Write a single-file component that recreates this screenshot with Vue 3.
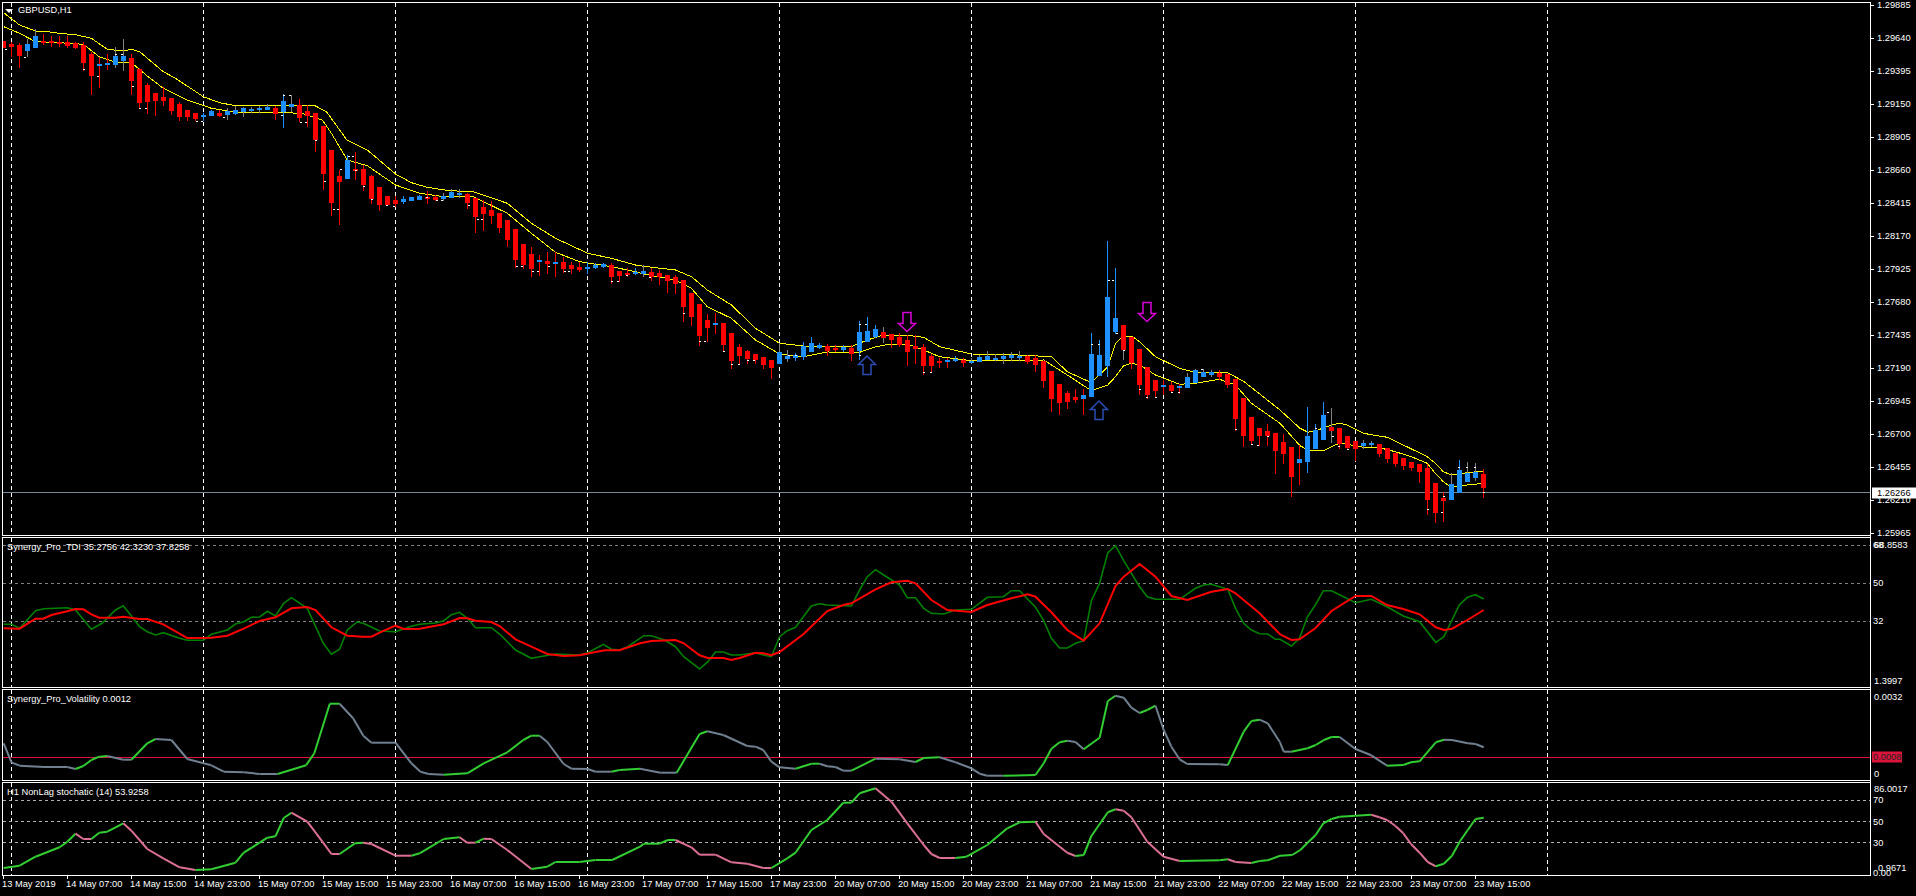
<script setup>
// candles read as [type, bodyTop, bodyBottom, wickTop, wickBottom]
// r red, b blue, g blue with grey wick, c blue with red wick, R red with grey wick
const zoneA = [
  ["r",123,145,123,145],["r",132,141,125,170],["r",134,168,128,203],["g",132,153,118,172],["g",108,144,88,144],
  ["r",124,128,103,135],["r",124,130,108,140],["r",126,131,108,140],["r",125,137,108,145],["r",130,144,125,148],
  ["r",135,189,125,212],["r",162,228,155,285],["c",192,198,172,264],["c",189,194,162,210],["g",168,195,142,203],
  ["g",168,184,118,212],["r",174,243,162,285],["r",207,309,205,325],["r",255,306,250,342],["r",279,303,279,347],
  ["r",291,303,260,318],["r",294,333,294,345],["r",312,351,306,362],["r",330,352,330,362],["r",339,358,339,362],
  ["b",345,351,340,362],["b",333,348,330,348],["r",339,347,330,350],["g",333,346,325,360],["g",330,342,318,345],
  ["g",324,336,320,350],["g",327,333,320,340],["g",324,330,318,340],["g",321,330,312,330],["r",324,342,318,360],
  ["b",303,336,283,384],["g",312,321,285,336],["r",315,354,297,366],["r",333,348,315,380],["r",339,420,339,455],
  ["r",378,522,378,570],["r",450,609,450,648],["r",528,546,510,675],["b",480,537,465,537],["r",507,510,456,540],
  ["r",507,555,495,573],["r",528,598,525,612],["r",561,615,561,633],["r",588,615,588,618],["r",600,612,588,620],
  ["b",597,606,588,612],["b",591,603,590,603],["b",588,600,585,600],["r",591,594,573,612],["r",591,600,585,603],
  ["g",588,597,580,603],["g",576,594,567,594],["g",579,585,567,594],["r",582,609,580,627],["r",594,651,594,699],
  ["r",621,642,600,693],["r",630,648,603,672],["r",639,684,639,699],["r",660,720,660,741],["r",687,780,687,804],
  ["r",732,795,732,806],["r",762,807,741,831],["c",780,786,765,828],["r",783,792,756,822],["c",786,789,755,831],
  ["r",786,807,772,819],["r",795,807,785,822],["r",801,810,785,815],["b",801,807,785,822],["b",795,804,790,806],
  ["b",792,801,790,803],["r",795,831,790,852],["r",813,828,813,846],["r",819,822,805,831],["b",816,822,805,825],
];
const zoneB = [
  ["g",213,222,195,231],["r",216,231,204,243],["r",219,231,210,255],["r",225,243,225,279],["r",231,252,225,282],
  ["r",240,321,240,366],["r",279,351,279,378],["r",312,408,312,438],["r",360,384,342,426],["c",369,372,340,402],
  ["r",369,435,369,456],["r",399,483,399,507],["r",441,468,432,495],["r",453,477,450,492],["r",462,480,462,492],
  ["r",471,495,471,507],["r",480,504,480,537],["g",456,492,429,492],["g",468,477,450,486],["b",465,474,460,483],
  ["b",438,471,426,480],["b",429,456,411,456],["b",435,444,429,447],["r",438,453,432,468],["r",444,450,435,456],
  ["b",441,450,435,456],["r",444,462,435,483],["b",396,453,363,480],["b",393,426,351,426],["b",387,411,375,414],
  ["R",396,414,382,429],["r",402,420,402,444],["r",411,435,399,441],["r",420,456,405,498],["r",438,447,405,492],
  ["r",441,498,432,525],["r",468,498,462,519],["r",483,489,474,504],["c",480,486,474,504],["b",477,483,468,486],
  ["r",480,489,474,501],["g",483,486,474,492],["g",471,486,465,486],["g",468,480,453,480],["g",474,477,462,483],
  ["g",468,477,459,492],["g",465,474,456,483],["g",468,471,453,483],["r",468,486,465,492],["r",474,495,465,516],
  ["r",483,543,483,564],["r",513,597,513,636],["r",552,609,552,645],["r",579,606,573,627],["r",591,600,567,609],
  ["c",585,597,567,645],["b",462,591,399,591],["b",465,528,420,528],["b",291,498,123,531],["b",354,396,204,402],
  ["R",375,450,375,480],["r",411,489,411,507],["r",447,555,447,585],["r",501,585,501,597],["r",540,573,540,591],
  ["c",555,558,540,585],["r",555,573,546,579],["c",558,564,552,582],["g",531,564,519,564],["g",510,549,507,549],
  ["g",516,531,507,531],["g",516,525,510,531],["r",519,531,510,540],["r",522,555,522,564],["r",537,657,537,693],
  ["r",594,708,594,741],["r",651,723,651,735],["r",684,708,684,738],["r",693,708,672,738],["r",699,753,699,822],
];
const zoneC = [
  ["r",186,222,162,252],["r",201,291,201,350],["c",237,249,195,315],
];
const zoneD = [
  ["b",108,186,21,219],["b",90,147,72,147],["b",45,120,6,120],["R",81,93,24,129],["r",84,132,84,147],
  ["r",108,144,108,150],["r",123,147,123,183],["g",129,138,120,147],["g",129,135,123,141],["r",132,162,132,171],
  ["r",144,177,144,189],["r",159,192,159,201],["r",174,198,174,210],["r",186,204,186,213],["r",192,216,192,249],
  ["r",204,300,192,345],["r",249,339,249,369],["r",294,303,276,366],["g",252,300,219,300],["b",210,279,180,279],
  ["g",219,246,186,246],["g",216,234,189,243],["r",222,264,207,294],
];

const toCandles = (rows, originY) =>
  rows.map((r) => ({
    type: r[0],
    top: originY + r[1] / 3,
    bottom: originY + r[2] / 3,
    high: originY + r[3] / 3,
    low: originY + r[4] / 3,
  }));

const colors = { r: "#ff0000", b: "#1e90ff", g: "#1e90ff", c: "#1e90ff", R: "#ff0000" };
const wickColors = { r: "#ff0000", b: "#1e90ff", g: "#808080", c: "#ff0000", R: "#808080" };

const candles = [
  ...toCandles(zoneA, 0),
  ...toCandles(zoneB, 200),
  ...toCandles(zoneC, 380),
  ...toCandles(zoneD, 400),
].map((c, i) => ({
  ...c,
  x: 1 + 8 * i,
  wickX: 3 + 8 * i,
  height: Math.max(2, Math.round(c.bottom - c.top)),
  fill: colors[c.type],
  wick: wickColors[c.type],
}));

// helper: points read from crops, back to page pixels
const pts = (ox, sx, oy, list) =>
  list.map(([x, y]) => [ox + x / sx, oy + y / 3]);
const join = (...lists) => lists.flat();
const toPoints = (list) => list.map((p) => p[0].toFixed(1) + "," + p[1].toFixed(1)).join(" ");

const upperBand = join(
  pts(0, 2.45, 0, [[9,38],[48,75],[87,93],[116,95],[145,100],[185,104],[224,115],[263,148],[302,153],[322,148],[342,155],[400,215],[430,235],[498,290],[538,308],[577,317],[655,318],[734,315],[773,318],[800,335],[850,420],[900,450],[969,522],[1008,548],[1047,562],[1100,572],[1160,575],[1243,610],[1302,670],[1361,715],[1440,760],[1498,775],[1557,795]]),
  pts(640, 2.45, 200, [[9,199],[87,210],[126,230],[165,270],[224,315],[283,385],[342,430],[400,438],[518,440],[557,420],[597,405],[655,406],[695,412],[734,440],[812,462],[890,463],[1008,470],[1047,515],[1106,548],[1146,500],[1165,430],[1185,408],[1205,408],[1224,425],[1263,470],[1322,505],[1361,517],[1440,518],[1480,545],[1568,630]]),
  pts(1300, 3, 400, [[0,85],[24,97],[48,92],[94,75],[118,70],[142,75],[190,100],[238,108],[262,112],[310,135],[382,170],[406,190],[430,215],[454,225],[502,218],[550,213]])
);
const lowerBand = join(
  pts(0, 2.45, 0, [[9,80],[48,100],[87,125],[145,128],[204,133],[243,170],[283,187],[322,188],[361,228],[400,265],[459,300],[518,325],[577,337],[665,338],[694,338],[740,340],[790,360],[812,400],[851,480],[900,497],[969,555],[1028,580],[1087,590],[1160,590],[1243,640],[1302,700],[1361,757],[1420,785],[1498,800],[1557,815]]),
  pts(640, 2.45, 200, [[9,222],[87,240],[126,265],[165,320],[224,355],[283,420],[342,462],[400,470],[459,456],[538,457],[577,440],[616,432],[655,432],[695,450],[734,470],[812,482],[890,482],[989,480],[1047,525],[1106,572],[1146,555],[1165,530],[1185,497],[1204,490],[1224,495],[1263,525],[1322,553],[1361,550],[1420,538],[1459,555],[1498,610],[1568,670]]),
  pts(1300, 3, 400, [[0,137],[24,150],[70,152],[94,140],[118,130],[142,133],[190,142],[238,143],[286,155],[334,170],[382,190],[406,220],[430,245],[454,262],[502,255],[550,250]])
);

// little white dashes beside the candles
const dashes = join(
  pts(0, 2.45, 0, [[15,148],[62,172],[207,206],[241,227],[285,162],[300,162],[325,259],[343,323],[357,323],[482,362],[495,362],[548,350],[690,345],[697,285],[710,285],[738,366],[750,366],[775,420],[796,544],[818,628],[828,628],[836,507],[855,468],[866,468],[872,509],[893,557],[912,598],[948,615],[966,618],[1045,592],[1070,601],[1082,601],[1148,615],[1170,657],[1180,657],[1266,797],[1280,797],[1305,814],[1318,814],[1345,798],[1385,814],[1395,814],[1500,842],[1515,842],[1535,825]]),
  pts(640, 2.45, 200, [[25,231],[107,340],[148,423],[160,423],[205,452],[225,493],[242,493],[265,480],[280,480],[365,465],[381,465],[540,372],[553,372],[539,465],[695,517],[712,517],[1108,432],[1125,432],[1148,240],[1160,240],[1168,399],[1185,450],[1225,568],[1243,590],[1263,590],[1303,576],[1320,576],[1377,507],[1460,686],[1500,732],[1515,735],[1538,708]]),
  pts(1300, 3, 400, [[48,85],[85,35],[100,108],[118,138],[145,147],[385,327],[425,337],[432,287],[478,202],[500,202],[525,202],[552,277]])
);

const tdiGreen = join(
  pts(0, 2.45, 530, [[9,283],[28,283],[48,295],[87,242],[108,236],[165,233],[185,240],[224,298],[250,280],[283,240],[302,227],[322,258],[342,290],[361,305],[381,315],[400,308],[440,325],[459,331],[498,331],[518,313],[557,300],[577,282],[597,275],[616,262],[636,261],[655,244],[675,258],[695,220],[714,203],[753,235],[792,340],[812,373],[832,358],[851,300],[875,276],[890,280],[930,303],[969,305],[1008,289],[1028,283],[1067,279],[1087,272],[1106,254],[1126,247],[1145,265],[1165,293],[1204,293],[1224,312],[1263,360],[1302,385],[1322,380],[1361,372],[1420,375],[1440,368],[1478,343],[1498,358],[1518,360],[1538,350]]),
  pts(640, 2.45, 530, [[9,317],[28,317],[60,330],[87,350],[107,380],[146,417],[166,395],[185,366],[204,366],[224,375],[244,375],[283,368],[302,375],[322,380],[342,320],[361,302],[381,292],[420,228],[440,221],[459,225],[518,228],[538,180],[557,140],[577,119],[597,135],[636,165],[655,203],[675,203],[695,235],[714,250],[744,252],[773,240],[812,238],[851,202],[890,200],[910,182],[930,182],[969,232],[989,272],[1008,325],[1028,354],[1047,354],[1067,340],[1087,332],[1106,212],[1126,160],[1146,68],[1165,47],[1185,92],[1224,170],[1243,200],[1263,208],[1322,208],[1361,175],[1381,165],[1400,163],[1440,178],[1459,235],[1479,280],[1498,300],[1518,311],[1538,312],[1557,328]]),
  pts(1280, 2.465, 380, [[0,778],[28,798],[48,775],[67,712],[87,675],[107,632],[127,632],[186,668],[225,658],[264,680],[304,708],[344,725],[384,787],[404,770],[442,675],[462,652],[482,644],[502,657]])
);
const tdiRed = join(
  pts(0, 2.45, 530, [[9,295],[48,296],[87,266],[106,266],[126,255],[165,244],[185,237],[204,238],[224,253],[243,263],[283,263],[302,260],[342,267],[361,267],[400,283],[459,324],[518,323],[557,317],[597,296],[636,273],[675,262],[714,235],[753,231],[773,240],[812,292],[851,317],[890,320],[910,320],[930,308],[969,287],[989,297],[1028,296],[1087,283],[1126,264],[1145,265],[1165,272],[1204,276],[1224,288],[1263,328],[1302,350],[1341,372],[1381,378],[1420,376],[1459,366],[1482,361],[1518,361]]),
  pts(640, 2.45, 530, [[0,340],[28,333],[87,330],[107,340],[146,376],[166,384],[204,384],[224,390],[244,384],[283,368],[302,370],[322,376],[342,366],[400,313],[459,243],[498,225],[518,220],[577,178],[616,157],[655,152],[675,160],[714,210],[753,240],[812,246],[851,225],[910,205],[950,193],[969,200],[1008,247],[1047,300],[1087,332],[1126,280],[1165,168],[1185,140],[1224,102],[1263,140],[1302,198],[1341,210],[1400,185],[1440,177],[1459,190],[1518,250]]),
  pts(1280, 2.465, 380, [[0,763],[28,780],[48,778],[87,745],[127,693],[186,648],[225,648],[264,675],[304,687],[344,703],[384,742],[404,750],[424,746],[462,720],[502,690]])
);

const volLine = join(
  pts(0, 2.45, 530, [[9,640],[28,697],[48,707],[108,711],[165,711],[185,717],[204,708],[224,690],[243,680],[263,678],[302,689],[322,689],[361,640],[381,627],[420,630],[459,687],[518,706],[548,725],[597,727],[636,732],[680,732],[750,706],[770,670],[808,521],[832,521],[865,565],[890,617],[910,638],[969,638],[1008,700],[1030,725],[1050,732],[1087,734],[1145,730],[1185,700],[1243,667],[1282,630],[1302,617],[1322,617],[1341,636],[1381,702],[1400,716],[1440,717],[1459,725],[1498,725],[1518,720]]),
  pts(640, 2.45, 530, [[0,716],[50,728],[90,728],[146,612],[165,604],[204,615],[263,648],[283,650],[302,660],[322,695],[342,712],[381,716],[420,701],[440,701],[459,709],[479,711],[498,722],[518,722],[577,686],[636,688],[675,696],[695,684],[734,682],[773,697],[812,715],[832,731],[851,737],[890,737],[969,735],[989,700],[1008,656],[1028,637],[1047,632],[1067,636],[1087,658],[1126,623],[1146,513],[1165,497],[1185,503],[1204,533],[1224,549],[1243,540],[1263,527],[1283,600],[1302,650],[1322,688],[1341,702],[1420,703],[1440,705],[1479,605],[1498,573],[1518,569],[1538,580]]),
  pts(1280, 2.465, 680, [[0,187],[9,215],[28,215],[68,205],[88,195],[107,181],[127,171],[147,171],[186,207],[225,226],[264,257],[304,255],[323,247],[344,244],[384,187],[404,179],[424,180],[463,190],[482,192],[502,202]])
);
const stoLine = join(
  pts(0, 2.45, 530, [[9,1014],[48,1007],[87,980],[146,952],[165,935],[185,911],[204,927],[224,927],[243,908],[263,905],[302,880],[322,902],[361,957],[400,985],[440,1012],[479,1020],[518,1018],[577,998],[597,968],[636,938],[655,923],[675,919],[695,864],[714,848],[753,875],[790,935],[812,972],[832,972],[870,940],[890,938],[910,942],[969,977],[1008,977],[1028,970],[1087,927],[1126,922],[1145,938],[1165,938],[1185,926],[1204,927],[1243,960],[1302,1017],[1341,1010],[1361,996],[1420,996],[1459,990],[1500,990]]),
  pts(640, 2.45, 530, [[0,950],[9,941],[48,941],[68,930],[87,930],[126,952],[146,974],[185,974],[224,997],[263,1001],[302,1014],[322,1014],[361,985],[381,968],[420,900],[459,870],[498,818],[518,818],[538,790],[577,775],[616,815],[655,880],[695,945],[714,972],[734,984],[773,984],[800,980],[851,945],[900,895],[930,877],[969,875],[989,912],[1047,968],[1067,978],[1087,975],[1106,918],[1146,847],[1165,838],[1185,842],[1204,862],[1243,935],[1283,980],[1322,993],[1420,991],[1440,988],[1459,996],[1498,999],[1518,993],[1538,991]]),
  pts(1280, 2.465, 680, [[0,527],[30,525],[50,510],[68,488],[88,465],[107,430],[127,417],[147,410],[186,407],[225,404],[245,412],[264,420],[284,437],[304,460],[323,492],[344,518],[364,546],[384,559],[404,551],[424,527],[444,483],[463,450],[482,417],[502,413]])
);

// rising stretches are green, falling ones take the second colour
const toSegments = (list, fallColor) => {
  const out = [];
  let color = "#32cd32";
  for (let i = 1; i < list.length; i++) {
    const dy = list[i][1] - list[i - 1][1];
    if (dy < 0) color = "#32cd32";
    if (dy > 0) color = fallColor;
    out.push({ points: toPoints([list[i - 1], list[i]]), color });
  }
  return out;
};
const volSegments = toSegments(volLine, "#708090");
const stoSegments = toSegments(stoLine, "#db7093");

const gridX = [11, 203, 395, 587, 779, 971, 1163, 1355, 1547];

const priceLabels = [
  "1.29885","1.29640","1.29395","1.29150","1.28905","1.28660","1.28415","1.28170","1.27925",
  "1.27680","1.27435","1.27190","1.26945","1.26700","1.26455","1.26210","1.25965",
].map((text, i) => ({ text, y: 4.7 + 33 * i, left: 6, tick: true }));

const panels = [
  {
    id: "main", top: 2, height: 534, levels: [], title: "",
    labels: [...priceLabels, { text: "1.26266", y: 492.5, left: 1, boxed: "white" }],
  },
  {
    id: "tdi", top: 537, height: 151, levels: [545, 583, 621], levelColor: "#808080",
    title: "Synergy_Pro_TDI 35.2756 42.3230 37.8258",
    labels: [
      { text: "68", y: 545, left: 2 },
      { text: "68.8583", y: 545, left: 3 },
      { text: "50", y: 583, left: 2 },
      { text: "32", y: 621, left: 2 },
      { text: "1.3997", y: 680.7, left: 3 },
    ],
  },
  {
    id: "vol", top: 689, height: 92, levels: [], title: "Synergy_Pro_Volatility 0.0012",
    labels: [
      { text: "0.0032", y: 696.7, left: 3 },
      { text: "0.0008", y: 757.3, left: 1, boxed: "crimson" },
      { text: "0", y: 773.7, left: 3 },
    ],
  },
  {
    id: "sto", top: 782, height: 94, levels: [800, 821, 842], levelColor: "#b0b0b0",
    title: "H1 NonLag stochatic (14) 53.9258",
    labels: [
      { text: "86.0017", y: 789.3, left: 3 },
      { text: "70", y: 800.3, left: 2 },
      { text: "50", y: 821.7, left: 2 },
      { text: "30", y: 842.7, left: 2 },
      { text: "0.00", y: 873, left: 2 },
      { text: "0.9671", y: 868.3, left: 7 },
    ],
  },
];

const timeLabels = [
  "13 May 2019","14 May 07:00","14 May 15:00","14 May 23:00","15 May 07:00","15 May 15:00",
  "15 May 23:00","16 May 07:00","16 May 15:00","16 May 23:00","17 May 07:00","17 May 15:00",
  "17 May 23:00","20 May 07:00","20 May 15:00","20 May 23:00","21 May 07:00","21 May 15:00",
  "21 May 23:00","22 May 07:00","22 May 15:00","22 May 23:00","23 May 07:00","23 May 15:00",
];

const upArrow = (x, y) =>
  `${x},${y} ${x + 8.5},${y + 8.5} ${x + 4},${y + 8.5} ${x + 4},${y + 18.5} ${x - 4},${y + 18.5} ${x - 4},${y + 8.5} ${x - 8.5},${y + 8.5}`;
const downArrow = (x, y) =>
  `${x - 4},${y} ${x + 4},${y} ${x + 4},${y + 11} ${x + 8.5},${y + 11} ${x},${y + 19} ${x - 8.5},${y + 11} ${x - 4},${y + 11}`;
const arrowsUp = [upArrow(867, 356), upArrow(1099, 401)];
const arrowsDown = [downArrow(907, 312.5), downArrow(1147, 302.5)];
</script>

<template>
  <div class="terminal">
    <div v-for="p in panels" :key="p.id" class="panel" :class="p.id">
      <div class="plot">
        <svg
          class="canvas"
          width="1867"
          :height="p.height - 2"
          :viewBox="`3 ${p.top + 1} 1867 ${p.height - 2}`"
        >
          <line
            v-for="x in gridX"
            :key="x"
            class="grid"
            :x1="x + 0.5"
            :x2="x + 0.5"
            :y1="p.top + 1"
            :y2="p.top + p.height"
          />
          <line
            v-for="y in p.levels"
            :key="y"
            class="level"
            :stroke="p.levelColor"
            x1="3"
            x2="1870"
            :y1="y + 0.5"
            :y2="y + 0.5"
          />

          <template v-if="p.id === 'main'">
            <line class="price-line" x1="3" x2="1870" y1="492.5" y2="492.5" />
            <!-- the bars sit in front of the bands -->
            <polyline class="band" :points="toPoints(upperBand)" />
            <polyline class="band" :points="toPoints(lowerBand)" />
            <g v-for="c in candles" :key="c.x">
              <rect :x="c.wickX" :y="c.high" width="1" :height="c.low - c.high" :fill="c.wick" />
              <rect :x="c.x" :y="c.top" width="5" :height="c.height" :fill="c.fill" />
            </g>
            <rect
              v-for="(d, i) in dashes"
              :key="i"
              :x="d[0] - 1"
              :y="d[1]"
              width="2"
              height="1"
              fill="#fff"
            />
            <polygon v-for="a in arrowsUp" :key="a" class="arrow-up" :points="a" />
            <polygon v-for="a in arrowsDown" :key="a" class="arrow-down" :points="a" />
          </template>

          <template v-if="p.id === 'tdi'">
            <polyline class="tdi-green" :points="toPoints(tdiGreen)" />
            <polyline class="tdi-red" :points="toPoints(tdiRed)" />
          </template>

          <template v-if="p.id === 'vol'">
            <line class="vol-base" x1="3" x2="1870" y1="757.5" y2="757.5" />
            <polyline
              v-for="(s, i) in volSegments"
              :key="i"
              class="seg"
              :stroke="s.color"
              :points="s.points"
            />
          </template>

          <template v-if="p.id === 'sto'">
            <polyline
              v-for="(s, i) in stoSegments"
              :key="i"
              class="seg"
              :stroke="s.color"
              :points="s.points"
            />
          </template>
        </svg>

        <div v-if="p.id === 'main'" class="symbol">
          <span class="caret"></span>
          <span>GBPUSD,H1</span>
        </div>
        <div v-else class="title">{{ p.title }}</div>
      </div>

      <div class="axis">
        <template v-for="l in p.labels" :key="l.text + l.y">
          <span v-if="l.tick" class="axis-tick" :style="{ top: l.y - p.top + 'px' }"></span>
          <span
            class="axis-label"
            :class="l.boxed"
            :style="{ top: l.y - p.top + 'px', left: l.left + 'px' }"
          >{{ l.text }}</span>
        </template>
      </div>
    </div>

    <div class="time-axis">
      <div v-for="t in timeLabels" :key="t" class="time-cell">
        <span class="time-tick"></span>
        <span class="time-label">{{ t }}</span>
      </div>
    </div>
  </div>
</template>

<style>
html,
body {
  background: #000;
}
</style>

<style scoped>
.terminal {
  width: 1916px;
  height: 896px;
  padding: 2px 0 0 2px;
  box-sizing: border-box;
  background: #000;
  color: #fff;
  font-family: "Liberation Sans", Arial, sans-serif;
  font-size: 9.3px;
  overflow: hidden;
}

.panel {
  display: flex;
}
.panel + .panel {
  margin-top: 1px;
}
.panel.main {
  height: 534px;
}
.panel.tdi {
  height: 151px;
}
.panel.vol {
  height: 92px;
}
.panel.sto {
  height: 94px;
}

.plot {
  position: relative;
  width: 1869px;
  border: 1px solid #fff;
  box-sizing: border-box;
  overflow: hidden;
}

.canvas {
  display: block;
  shape-rendering: crispEdges;
}

.grid {
  stroke: #fff;
  stroke-width: 1;
  stroke-dasharray: 4 3;
}
.level {
  stroke-width: 1;
  stroke-dasharray: 3 3;
}
.band {
  fill: none;
  stroke: #ffff00;
  stroke-width: 1;
}
.price-line {
  stroke: #778899;
  stroke-width: 1;
}
.vol-base {
  stroke: #dc143c;
  stroke-width: 1;
}
.arrow-up {
  fill: none;
  stroke: #2a4cb4;
  stroke-width: 1.5;
  shape-rendering: auto;
}
.arrow-down {
  fill: none;
  stroke: #d800d8;
  stroke-width: 1.5;
  shape-rendering: auto;
}
.tdi-green {
  fill: none;
  stroke: #008000;
  stroke-width: 1.6;
  shape-rendering: auto;
}
.tdi-red {
  fill: none;
  stroke: #ff0000;
  stroke-width: 2;
  shape-rendering: auto;
}
.seg {
  fill: none;
  stroke-width: 2;
  shape-rendering: auto;
}

.symbol {
  position: absolute;
  top: 1px;
  left: 2px;
  display: flex;
  align-items: center;
  gap: 5px;
  line-height: 13px;
}
.caret {
  width: 0;
  height: 0;
  border-left: 4px solid transparent;
  border-right: 4px solid transparent;
  border-top: 4px solid #fff;
}
.title {
  position: absolute;
  top: 3px;
  left: 4px;
  line-height: 12px;
  white-space: nowrap;
}

.axis {
  position: relative;
  flex: 1;
}
/* the right edge of the plot runs on through the gap between panels */
.panel + .panel .axis::before {
  content: "";
  position: absolute;
  left: -1px;
  top: -1px;
  width: 1px;
  height: 1px;
  background: #fff;
}
.axis-tick {
  position: absolute;
  left: 0;
  width: 3px;
  height: 1px;
  background: #fff;
}
.axis-label {
  position: absolute;
  transform: translateY(-50%);
  line-height: 11px;
  white-space: nowrap;
}
.axis-label.white {
  padding: 0 5px;
  background: #fff;
  color: #000;
}
.axis-label.crimson {
  padding: 0 1px;
  background: #dc143c;
  color: #222;
}

.time-axis {
  display: flex;
  padding-left: 1px;
}
.time-cell {
  display: flex;
  flex-direction: column;
  width: 64px;
  flex-shrink: 0;
}
.time-tick {
  display: block;
  width: 1px;
  height: 3px;
  background: #fff;
}
.time-label {
  margin-left: -1px;
  line-height: 11px;
  white-space: nowrap;
}
</style>
